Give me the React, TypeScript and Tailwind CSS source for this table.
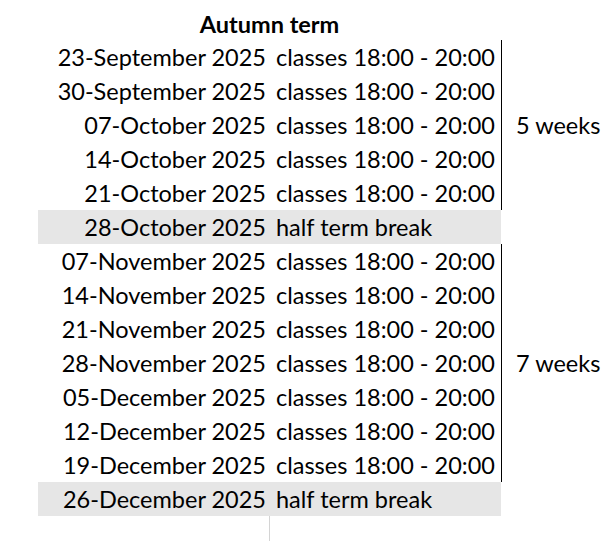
const groupA = [
  "23-September 2025",
  "30-September 2025",
  "07-October 2025",
  "14-October 2025",
  "21-October 2025",
];

const groupB = [
  "07-November 2025",
  "14-November 2025",
  "21-November 2025",
  "28-November 2025",
  "05-December 2025",
  "12-December 2025",
  "19-December 2025",
];

function Row({ date, note }: { date: string; note: string }) {
  return (
    <div className="flex h-[34px] items-center pt-[2px]">
      <div className="w-[232px] pr-[4px] text-right">{date}</div>
      <div className="pl-[6px]">{note}</div>
    </div>
  );
}

function BreakRow({ date }: { date: string }) {
  return (
    <div className="ml-[38px] w-[463px] bg-[#e6e6e6]">
      <Row date={date} note="half term break" />
    </div>
  );
}

function Group({ dates, weeks }: { dates: string[]; weeks: string }) {
  return (
    <div className="flex">
      <div className="ml-[38px] w-[463px]">
        {dates.map((d) => (
          <Row key={d} date={d} note="classes 18:00 - 20:00" />
        ))}
      </div>
      <div className="flex items-center border-l border-black pt-[2px] pl-[14px]">{weeks}</div>
    </div>
  );
}

export default function App() {
  return (
    <div
      className="h-[541px] w-[613px] overflow-hidden bg-white pt-[6px] text-[23.5px] leading-none text-black"
      style={{ fontFamily: "Lato, 'Noto Sans', sans-serif" }}
    >
      <div className="ml-[38px] flex h-[34px] w-[463px] items-center justify-center pt-[3px] font-bold">
        Autumn term
      </div>
      <Group dates={groupA} weeks="5 weeks" />
      <BreakRow date="28-October 2025" />
      <Group dates={groupB} weeks="7 weeks" />
      <BreakRow date="26-December 2025" />
      <div className="ml-[269px] h-[25px] border-l border-[#d4d4d4]" />
    </div>
  );
}
